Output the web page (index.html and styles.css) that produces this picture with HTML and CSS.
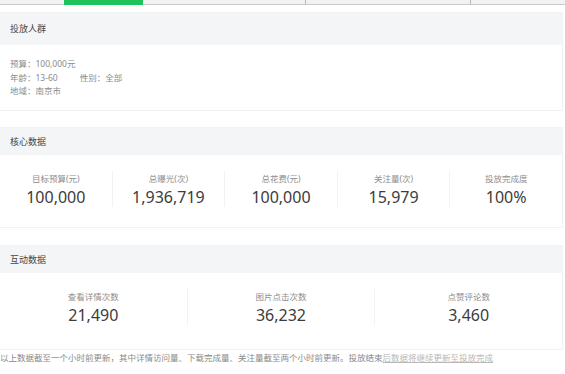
FILE: index.html
```html
<!DOCTYPE html>
<html lang="zh-CN">
<head>
  <meta charset="UTF-8" />
  <meta name="viewport" content="width=device-width, initial-scale=1.0"/>
  <title>投放数据</title>
  <link rel="stylesheet" href="styles.css">
</head>
<body>

  <!-- Tabs -->
  <div class="tabs">
    <div class="tab tab-first"></div>
    <div class="tab tab-active"></div>
    <div class="tab tab-mid"></div>
    <div class="tab tab-mid2"></div>
    <div class="tab tab-last"></div>
  </div>

  <div class="content">

    <!-- 投放人群 -->
    <div class="card">
      <div class="card-head">投放人群</div>
      <div class="card-body audience">
        <p>预算：100,000元</p>
        <p>年龄：13-60<span class="gap"></span>性别：全部</p>
        <p>地域：南京市</p>
      </div>
    </div>

    <!-- 核心数据 -->
    <div class="card card-core">
      <div class="card-head small">核心数据</div>
      <div class="card-body stats">
        <div class="stat"><div class="label">目标预算(元)</div><div class="value">100,000</div></div>
        <div class="stat"><div class="label">总曝光(次)</div><div class="value">1,936,719</div></div>
        <div class="stat"><div class="label">总花费(元)</div><div class="value">100,000</div></div>
        <div class="stat"><div class="label">关注量(次)</div><div class="value">15,979</div></div>
        <div class="stat"><div class="label">投放完成度</div><div class="value">100%</div></div>
      </div>
    </div>

    <!-- 互动数据 -->
    <div class="card card-interact">
      <div class="card-head small">互动数据</div>
      <div class="card-body stats tall">
        <div class="stat"><div class="label">查看详情次数</div><div class="value">21,490</div></div>
        <div class="stat"><div class="label">图片点击次数</div><div class="value">36,232</div></div>
        <div class="stat"><div class="label">点赞评论数</div><div class="value">3,460</div></div>
      </div>
    </div>

    <p class="note">以上数据截至一个小时前更新，其中详情访问量、下载完成量、关注量截至两个小时前更新。投放结束<span class="mark">后数据将继续更新至投放完成</span></p>
  </div>

</body>
</html>
```

FILE: styles.css
```css
* {
  box-sizing: border-box;
}

body {
  margin: 0;
  background: #fff;
  color: #333;
  font-family: "Noto Sans", "Noto Sans CJK SC", sans-serif;
  overflow: hidden;
}

.tabs {
  display: flex;
  height: 5px;
  background: #f2f2f2;
  border-bottom: 1px solid #c9c9c9;
}

.tab {
  height: 100%;
}

.tab-first {
  width: 64px;
}

.tab-active {
  width: 79px;
  background: #1fc35b;
  height: 5px;
}

.tab-mid {
  width: 163px;
  border-right: 1px solid #b9b9b9;
}

.tab-mid2 {
  width: 165px;
  border-right: 1px solid #b9b9b9;
}

.tab-last {
  flex: 1;
}

.content {
  padding: 7px 2px 0 0;
}

.card {
  border: 1px solid #f1f2f4;
  border-left: none;
  margin-bottom: 18px;
  background: #fff;
}

.card-core {
  margin-top: -2px;
  margin-bottom: 17px;
}

.card-head {
  background: #f4f5f7;
  height: 32px;
  line-height: 32px;
  padding-left: 10px;
  font-size: 9px;
  color: #444;
}

.card-head.small {
  height: 27px;
  line-height: 27px;
}

.audience {
  padding: 12px 10px 12px;
  font-size: 8.5px;
  color: #8c8c8c;
}

.audience p {
  margin: 0;
  line-height: 13.5px;
}

.gap {
  display: inline-block;
  width: 22px;
}

.stats {
  display: flex;
  padding: 16px 0 20px;
}

.stats.tall {
  padding-bottom: 24px;
}

.stat {
  flex: 1;
  text-align: center;
  border-left: 1px solid #f2f2f2;
}

.stat:first-child {
  border-left: none;
}

.label {
  font-size: 8.5px;
  color: #8e8e8e;
  line-height: 16px;
}

.value {
  font-size: 16px;
  color: #3c3c3c;
  line-height: 20px;
}

.note {
  margin: -17px 0 0;
  font-size: 8.5px;
  color: #8a8a8a;
  white-space: nowrap;
}

.mark {
  color: #b8b8b8;
  text-decoration: underline;
}
```
